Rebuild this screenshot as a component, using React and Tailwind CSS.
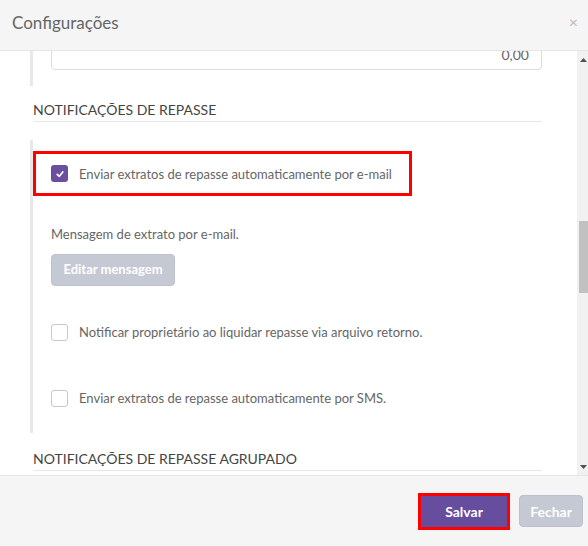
import React from "react";

const Box = ({ checked }) =>
  checked ? (
    <span className="flex h-[17px] w-[17px] shrink-0 items-center justify-center rounded-[3px] bg-[#6a4f9e]">
      <svg width="10" height="10" viewBox="0 0 10 10">
        <path d="M2.2 5.4 L4.3 7.3 L7.8 3" fill="none" stroke="#fff" strokeWidth="1.7" strokeLinecap="round" strokeLinejoin="round" />
      </svg>
    </span>
  ) : (
    <span className="h-[17px] w-[17px] shrink-0 rounded-[3px] border border-[#c8c8c8] bg-white" />
  );

const Check = ({ label, checked, className = "" }) => (
  <div className={`flex h-[20px] items-center gap-[11px] ${className}`}>
    <Box checked={checked} />
    <span className="whitespace-nowrap text-[13px] leading-[20px] text-[#666]">{label}</span>
  </div>
);

const Heading = ({ children, className = "" }) => (
  <div className={`ml-[3px] border-b border-[#e6e6e6] pb-[1px] text-[14px] leading-[20px] text-[#444] ${className}`}>
    {children}
  </div>
);

export default function App() {
  return (
    <div className="flex h-[546px] w-[588px] flex-col bg-white font-['Lato',sans-serif]">
      {/* header */}
      <div className="flex h-[51px] shrink-0 items-center justify-between border-b border-[#e5e5e5] bg-[#f5f5f5] pl-[12px] pr-[10px]">
        <span className="mb-[4px] text-[17px] text-[#666]">Configurações</span>
        <span className="mb-[6px] text-[16px] leading-none text-[#bbb]">×</span>
      </div>

      {/* body */}
      <div className="flex min-h-0 flex-1 overflow-hidden">
        <div className="flex flex-1 flex-col pl-[30px] pr-[35px]">
          <div className="flex h-[35px] shrink-0 flex-col border-l-[3px] border-[#e8e8e8] pl-[18px]">
            <div className="mt-[-21px] flex h-[40px] shrink-0 items-end justify-end rounded-[4px] border border-[#dcdcdc] pb-[4px] pr-[12px] text-[14px] leading-[20px] text-[#666]">
              0,00
            </div>
          </div>

          <Heading className="mt-[14px]">NOTIFICAÇÕES DE REPASSE</Heading>

          <div className="mt-[18px] border-l-[3px] border-[#e8e8e8] pb-[25px] pt-[11px]">
            <div className="flex h-[45px] w-[379px] items-center border-[3px] border-[#ff0000] pl-[15px]">
              <Check checked label="Enviar extratos de repasse automaticamente por e-mail" />
            </div>
            <div className="pl-[18px]">
              <div className="mt-[28px] text-[13px] leading-[20px] text-[#666]">
                Mensagem de extrato por e-mail.
              </div>
              <button className="mt-[10px] h-[32px] w-[124px] rounded-[4px] border border-[#bcc1cc] bg-[#c5c9d3] text-[13px] font-bold text-white">
                Editar mensagem
              </button>
              <Check className="mt-[36px]" label="Notificar proprietário ao liquidar repasse via arquivo retorno." />
              <Check className="mt-[46px]" label="Enviar extratos de repasse automaticamente por SMS." />
            </div>
          </div>

          <Heading className="mt-[16px]">NOTIFICAÇÕES DE REPASSE AGRUPADO</Heading>
        </div>

        {/* scrollbar */}
        <div className="flex w-[11px] shrink-0 flex-col items-end bg-[#f1f1f1]">
          <div className="flex h-[17px] w-[9px] items-center justify-center">
            <svg width="7" height="4" viewBox="0 0 7 4"><path d="M0 4 L3.5 0 L7 4 Z" fill="#505050" /></svg>
          </div>
          <div className="mt-[153px] h-[72px] w-[9px] bg-[#c1c1c1]" />
          <div className="flex-1" />
          <div className="flex h-[17px] w-[9px] items-center justify-center">
            <svg width="7" height="4" viewBox="0 0 7 4"><path d="M0 0 L3.5 4 L7 0 Z" fill="#505050" /></svg>
          </div>
        </div>
      </div>

      {/* footer */}
      <div className="flex h-[71px] shrink-0 items-center justify-end gap-[9px] border-t border-[#e5e5e5] bg-[#f5f5f5] pr-[5px]">
        <div className="border-[3px] border-[#ff0000]">
          <button className="h-[31px] w-[86px] bg-[#664d9e] text-[14px] font-bold text-white">Salvar</button>
        </div>
        <button className="h-[32px] w-[64px] rounded-[4px] border border-[#bcc1cc] bg-[#c5c9d3] text-[14px] font-bold text-white">
          Fechar
        </button>
      </div>
    </div>
  );
}
